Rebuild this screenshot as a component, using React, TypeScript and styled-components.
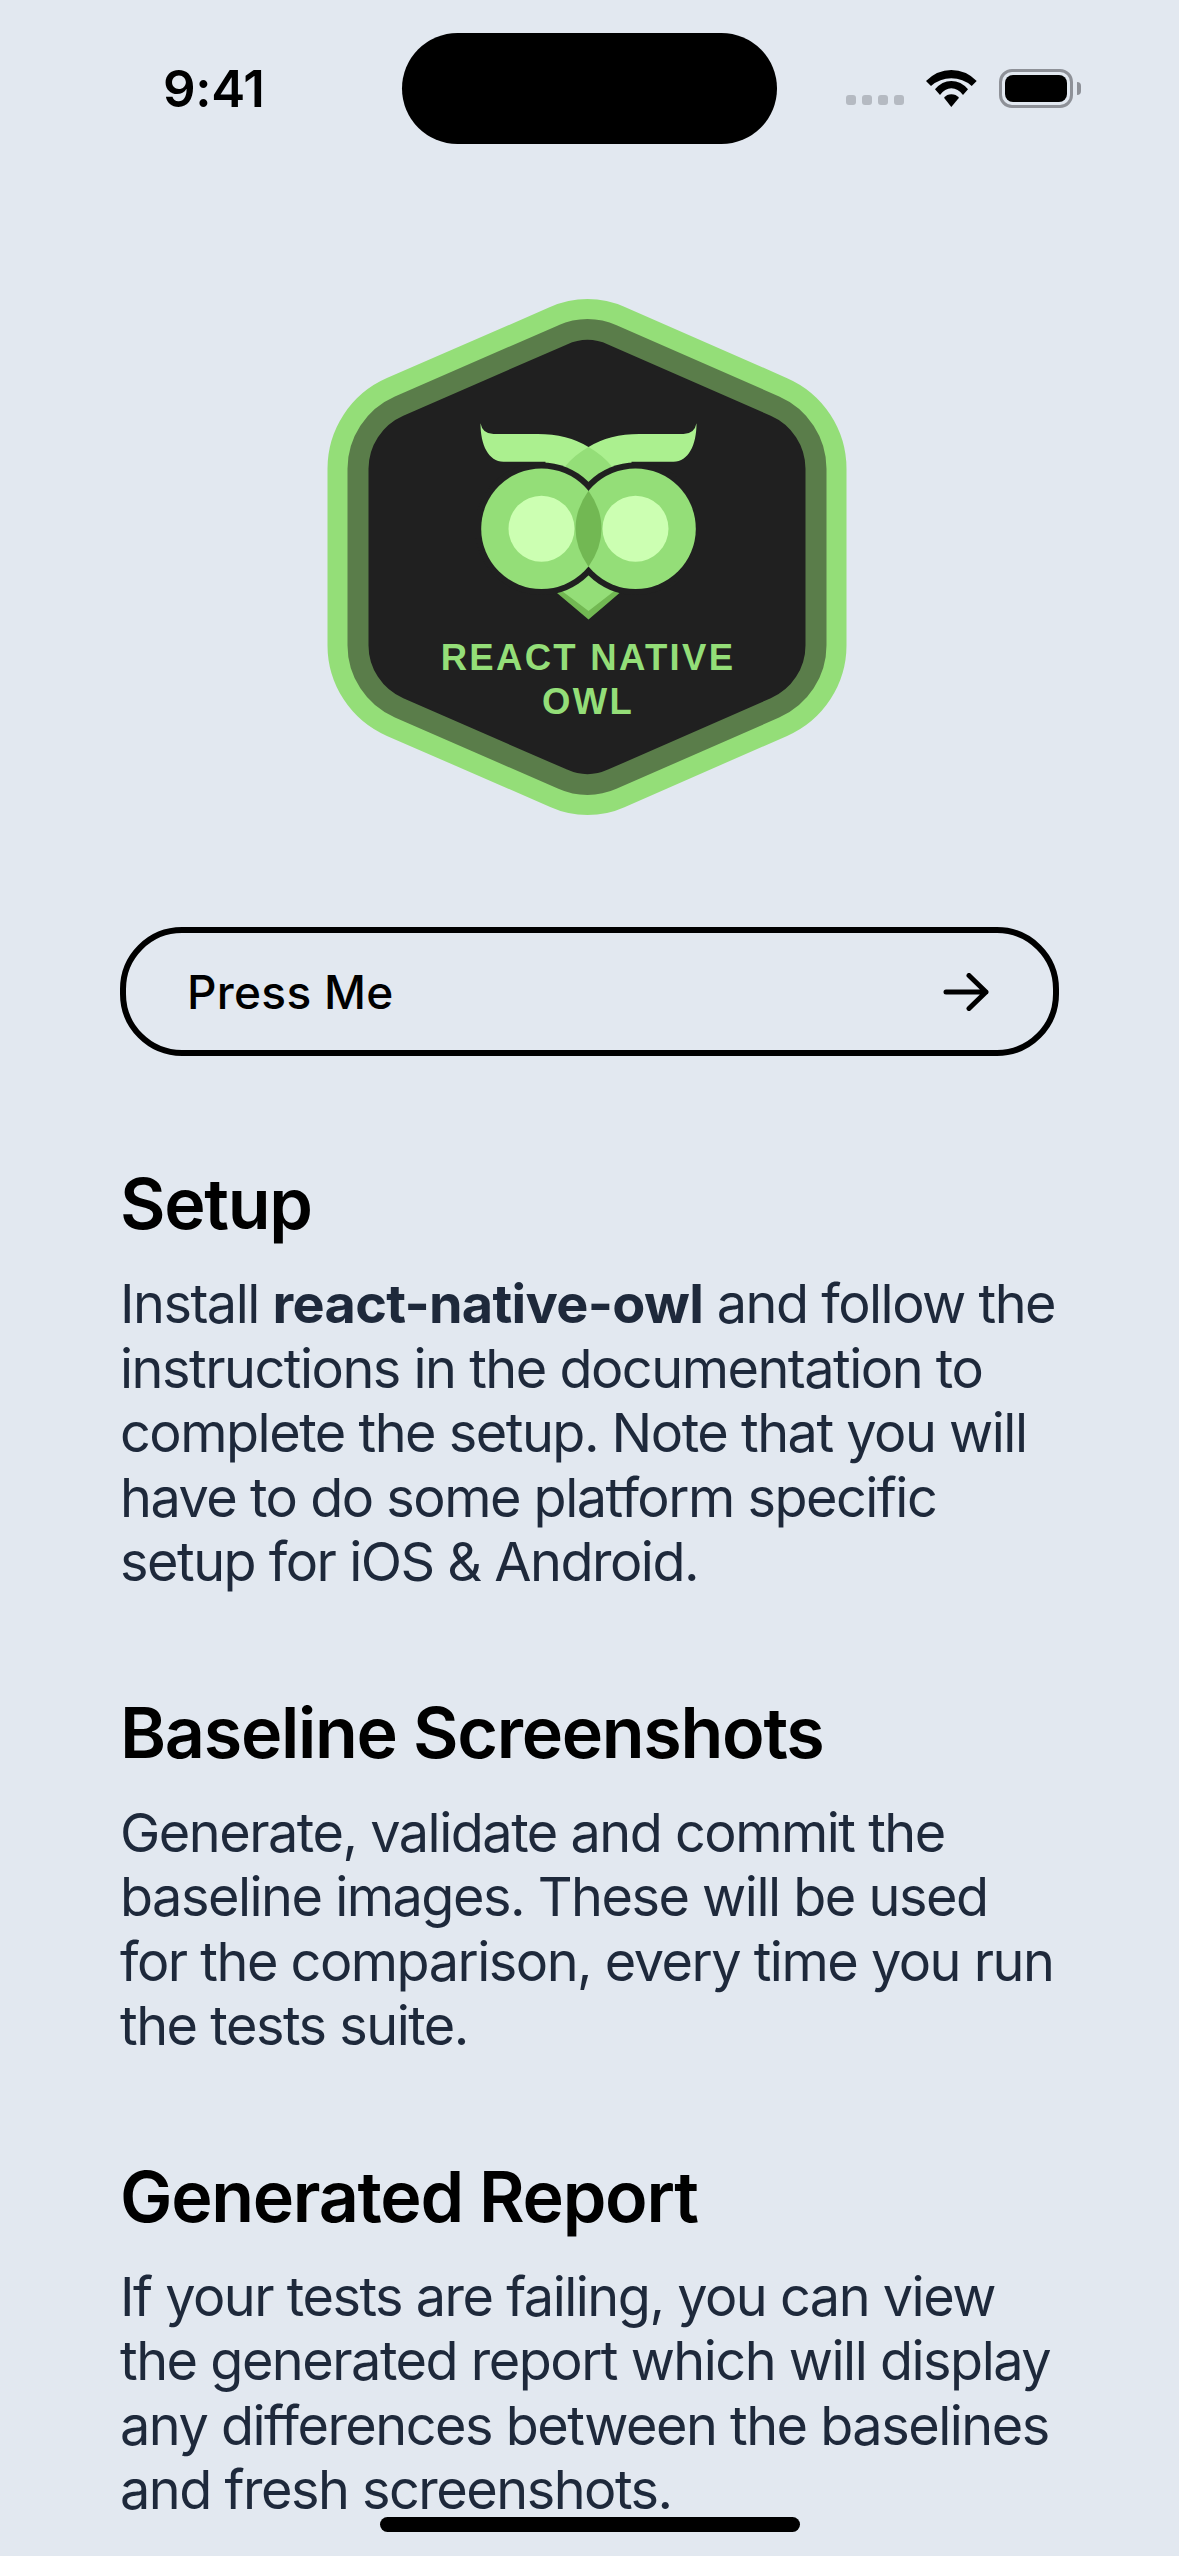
import React from 'react';
import styled, { createGlobalStyle } from 'styled-components';

const GlobalStyle = createGlobalStyle`
  html, body {
    margin: 0;
    padding: 0;
    background: #e2e8f0;
  }
`

const BADGE_PATH = 'M566.5,344.4 A50,50 0 0 1 607.5,344.4 L770.2,415.7 A58,58 0 0 1 805,469 L805,645 A58,58 0 0 1 770.2,698.3 L607.5,769.6 A50,50 0 0 1 566.5,769.6 L402.8,698.3 A58,58 0 0 1 368,645 L368,469 A58,58 0 0 1 402.8,415.7 Z';

const sections = [
  {
    title: 'Setup',
    body: (
      <>
        Install <strong>react-native-owl</strong> and follow the<br />
        instructions in the documentation to<br />
        complete the setup. Note that you will<br />
        have to do some platform specific<br />
        setup for iOS &amp; Android.
      </>
    ),
  },
  {
    title: 'Baseline Screenshots',
    body: (
      <>
        Generate, validate and commit the<br />
        baseline images. These will be used<br />
        for the comparison, every time you run<br />
        the tests suite.
      </>
    ),
  },
  {
    title: 'Generated Report',
    body: (
      <>
        If your tests are failing, you can view<br />
        the generated report which will display<br />
        any differences between the baselines<br />
        and fresh screenshots.
      </>
    ),
  },
];

const Logo: React.FC = () => (
  <LogoSvg viewBox="321.5 290 536 536">
    <path d={BADGE_PATH} fill="#94de78" stroke="#94de78" strokeWidth="82" strokeLinejoin="round" />
    <path d={BADGE_PATH} fill="#5a7d4a" stroke="#5a7d4a" strokeWidth="42" strokeLinejoin="round" />
    <path d={BADGE_PATH} fill="#202020" />

    <path d="M480,423.3 Q482,434 493,434 L537,434 Q567,434 588,447 Q600,455 611,466 L611,490 L545,490 L545,461.7 L503,461.7 C488,461.7 480,445 480,423.3 Z" fill="#abf08f" />
    <path d="M696,423.3 Q694,434 683,434 L639,434 Q609,434 588,447 Q576,455 565,466 L565,490 L631,490 L631,461.7 L673,461.7 C688,461.7 696,445 696,423.3 Z" fill="#abf08f" />
    <path d="M588,447 Q574,455 565,466 L565,490 L611,490 L611,466 Q602,455 588,447 Z" fill="#94de78" />

    <path d="M556.5,593 Q572,606 588,619.5 Q604,606 619,593 L588,570 Z" fill="#72b853" />
    <path d="M560,590 Q575,601 588,611 Q601,601 615,590 L588,570 Z" fill="#94de78" />

    <circle cx="541" cy="528.7" r="66.3" fill="#202020" />
    <circle cx="635" cy="528.7" r="66.3" fill="#202020" />
    <circle cx="541" cy="528.7" r="60.3" fill="#94de78" />
    <circle cx="635" cy="528.7" r="60.3" fill="#94de78" />
    <path d="M588,490.7 Q601,509 601,528.7 Q601,548 588,566.7 Q575,548 575,528.7 Q575,509 588,490.7 Z" fill="#72b853" />
    <circle cx="541" cy="528.7" r="33" fill="#ccffb2" />
    <circle cx="635" cy="528.7" r="33" fill="#ccffb2" />

    <LogoText x="587.5" y="670">REACT NATIVE</LogoText>
    <LogoText x="587.5" y="714">OWL</LogoText>
  </LogoSvg>
)

const WifiIcon: React.FC = () => (
  <svg width="51" height="38" viewBox="0 0 51 38" fill="#000">
    <path d="M0 11Q11 0 25.300 0Q40 0 50.700 11L45.700 16Q37 8.300 25.300 8.300Q14 8.300 5 16Z" />
    <path d="M9 19.300Q16 11 25.300 11Q35 11 42 19.300L37 25Q32 18.300 25.300 18.300Q19 18.300 14 25Z" />
    <path d="M18 27.700Q21 24.300 25.300 24.300Q30 24.300 33 27.700L25.300 37Z" />
  </svg>
)

const ArrowIcon: React.FC = () => (
  <svg width="46" height="38" viewBox="0 0 46 38" fill="none" stroke="#000" strokeWidth="5" strokeLinecap="round" strokeLinejoin="round">
    <path d="M3 19H43M26 2.500L43 19L26 35.500" />
  </svg>
)

export default function App() {
  return (
    <Screen>
      <GlobalStyle />
      <StatusBar>
        <Time>9:41</Time>
        <Island />
        <StatusIcons>
          <Dots>
            {[0, 1, 2, 3].map(i => <Dot key={i} />)}
          </Dots>
          <WifiIcon />
          <Battery>
            <BatteryFill />
          </Battery>
          <BatteryNub />
        </StatusIcons>
      </StatusBar>

      <Logo />

      <Content>
        <PressButton>
          <span>Press Me</span>
          <ArrowIcon />
        </PressButton>
        {sections.map(section => (
          <Section key={section.title}>
            <Heading>{section.title}</Heading>
            <Body>{section.body}</Body>
          </Section>
        ))}
      </Content>

      <HomeIndicator />
    </Screen>
  )
}

const Screen = styled.div`
  position: relative;
  width: 1179px;
  height: 2556px;
  overflow: hidden;
  background: #e2e8f0;
  font-family: Inter, "Liberation Sans", sans-serif;
`

const StatusBar = styled.div`
  display: flex;
  align-items: center;
  height: 111px;
  padding: 33px 0 0 163px;
`

const Time = styled.div`
  width: 239px;
  font-size: 51px;
  font-weight: 600;
  letter-spacing: -0.300px;
  color: #000;
  line-height: 1;
`

const Island = styled.div`
  width: 375px;
  height: 111px;
  border-radius: 56px;
  background: #000;
`

const StatusIcons = styled.div`
  display: flex;
  align-items: center;
  margin-left: 69px;
`

const Dots = styled.div`
  display: flex;
  gap: 6px;
  align-self: flex-end;
  margin: 0 22px 3px 0;
`

const Dot = styled.div`
  width: 10px;
  height: 10px;
  border-radius: 3px;
  background: #b5bac2;
`

const Battery = styled.div`
  box-sizing: border-box;
  width: 74px;
  height: 39px;
  margin-left: 22px;
  padding: 3px;
  border: 3px solid #8e9198;
  border-radius: 13px;
`

const BatteryFill = styled.div`
  width: 100%;
  height: 100%;
  border-radius: 8px;
  background: #000;
`

const BatteryNub = styled.div`
  width: 4px;
  height: 13px;
  margin-left: 4px;
  border-radius: 0 7px 7px 0;
  background: #8e9198;
`

const LogoSvg = styled.svg`
  display: block;
  width: 536px;
  height: 536px;
  margin: 146px auto 0;
`

const LogoText = styled.text`
  font-family: "Liberation Sans", Arial, sans-serif;
  font-size: 36.500px;
  font-weight: 700;
  letter-spacing: 2.300px;
  text-anchor: middle;
  fill: #94de78;
`

const Content = styled.div`
  display: flex;
  flex-direction: column;
  padding: 101px 0 0 120px;
`

const PressButton = styled.div`
  box-sizing: border-box;
  display: flex;
  align-items: center;
  justify-content: space-between;
  width: 939px;
  height: 129px;
  padding: 0 64px 0 61px;
  border: 6px solid #000;
  border-radius: 62px;
  font-size: 46px;
  font-weight: 500;
  letter-spacing: 0.300px;
  color: #000;
`

const Section = styled.section`
  margin-top: 106px;

  & + & {
    margin-top: 96px;
  }
`

const Heading = styled.h2`
  margin: 0 0 26px;
  font-size: 70px;
  line-height: 84px;
  font-weight: 600;
  letter-spacing: -1.300px;
  color: #000;
`

const Body = styled.p`
  margin: 0;
  font-size: 54px;
  line-height: 64.500px;
  font-weight: 400;
  letter-spacing: -1.500px;
  white-space: nowrap;
  color: #1e293b;

  strong {
    font-weight: 700;
    letter-spacing: -0.700px;
  }
`

const HomeIndicator = styled.div`
  position: absolute;
  left: 380px;
  bottom: 24px;
  width: 420px;
  height: 15px;
  border-radius: 8px;
  background: #000;
`
